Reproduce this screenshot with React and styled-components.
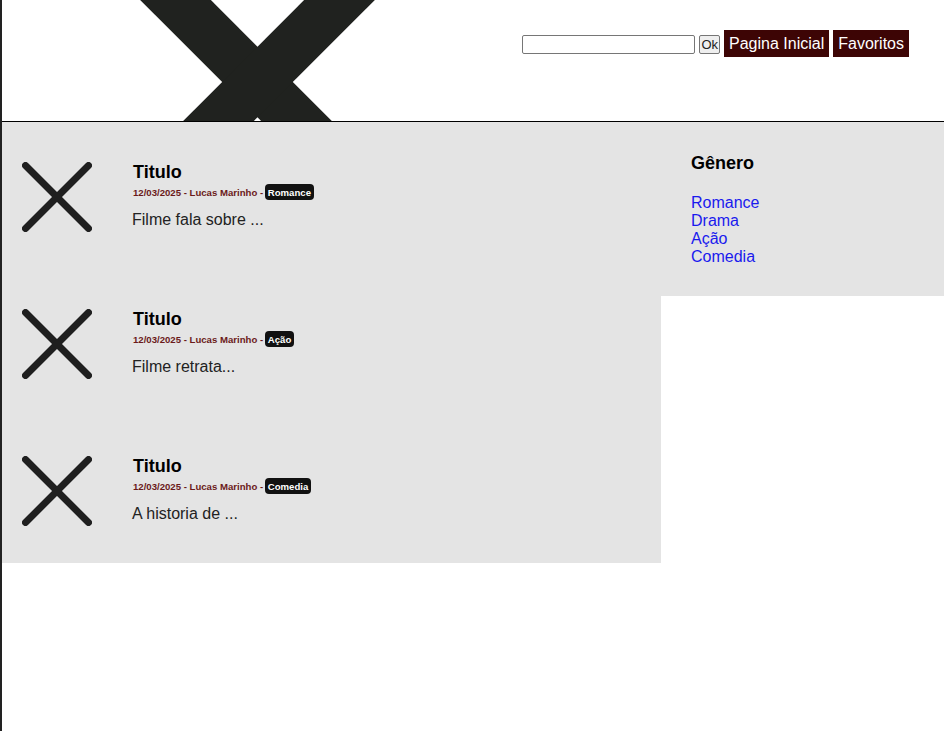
import styled, { createGlobalStyle } from 'styled-components';

const GlobalStyle = createGlobalStyle`
  html, body {
    margin: 0;
    padding: 0;
    background: #fff;
    font-family: "Liberation Sans", Arial, sans-serif;
  }
`;

const movies = [
  { id: 1, genre: 'Romance', text: 'Filme fala sobre ...' },
  { id: 2, genre: 'Ação', text: 'Filme retrata...' },
  { id: 3, genre: 'Comedia', text: 'A historia de ...' },
];

const genres = ['Romance', 'Drama', 'Ação', 'Comedia'];

const CrossIcon = ({ size = 70 }) => (
  <svg width={size} height={size} viewBox="0 0 70 70">
    <g stroke="#1f1f1f" strokeWidth="7" strokeLinecap="round">
      <line x1="3.5" y1="3.5" x2="66.5" y2="66.5" />
      <line x1="66.5" y1="3.5" x2="3.5" y2="66.5" />
    </g>
  </svg>
);

const Logo = () => (
  <svg width="260" height="121" viewBox="130 0 260 121">
    <g stroke="#20221f" strokeWidth="50">
      <line x1="7.5" y1="-168" x2="507.5" y2="332" />
      <line x1="507.5" y1="-168" x2="7.5" y2="332" />
    </g>
  </svg>
);

const App = () => {
  return (
    <>
      <GlobalStyle />
      <Page>
        <Header>
          <Logo />
          <Nav>
            <SearchInput type="text" />
            <OkButton>Ok</OkButton>
            <NavButton>Pagina Inicial</NavButton>
            <NavButton>Favoritos</NavButton>
          </Nav>
        </Header>
        <Main>
          <MovieList>
            {movies.map(movie => (
              <Card key={movie.id}>
                <Thumb>
                  <CrossIcon />
                </Thumb>
                <CardBody>
                  <Title>Titulo</Title>
                  <Meta>
                    12/03/2025 - Lucas Marinho -&nbsp;<Badge>{movie.genre}</Badge>
                  </Meta>
                  <Description>{movie.text}</Description>
                </CardBody>
              </Card>
            ))}
          </MovieList>
          <Aside>
            <AsideTitle>Gênero</AsideTitle>
            {genres.map(g => (
              <GenreLink key={g} href="#">{g}</GenreLink>
            ))}
          </Aside>
        </Main>
      </Page>
    </>
  );
};

const Page = styled.div`
  min-height: 100vh;
  border-left: 2px solid #222;
  box-sizing: border-box;
`;

const Header = styled.header`
  height: 121px;
  border-bottom: 1px solid #000;
  display: flex;
  align-items: flex-start;
  padding-left: 128px;
  overflow: hidden;
  svg {
    flex-shrink: 0;
  }
`;

const Nav = styled.nav`
  margin-left: auto;
  margin-right: 35px;
  margin-top: 30px;
  display: flex;
  align-items: center;
  gap: 4px;
`;

const SearchInput = styled.input`
  width: 173px;
  height: 19px;
  box-sizing: border-box;
  border: 1px solid #767676;
  border-radius: 2px;
  padding: 1px 2px;
  margin-top: 2px;
  font-size: 13px;
`;

const OkButton = styled.button`
  height: 19px;
  box-sizing: border-box;
  padding: 0 1px;
  margin-top: 2px;
  background: #efefef;
  border: 1px solid #767676;
  border-radius: 2px;
  font-family: "Liberation Sans", Arial, sans-serif;
  font-size: 13px;
  color: #222;
  line-height: 15px;
`;

const NavButton = styled.button`
  background: #3d0505;
  color: #fff;
  border: none;
  border-radius: 0;
  padding: 4px 5px;
  font-family: "Liberation Sans", Arial, sans-serif;
  font-size: 16px;
  line-height: 19px;
  cursor: pointer;
  &:first-of-type {
    margin-left: 1px;
  }
`;

const Main = styled.main`
  display: flex;
  align-items: flex-start;
`;

const MovieList = styled.section`
  width: 659px;
  background: #e4e4e4;
`;

const Card = styled.article`
  height: 147px;
  box-sizing: border-box;
  padding: 40px 0 0 20px;
  display: flex;
  align-items: flex-start;
`;

const Thumb = styled.div`
  width: 70px;
  height: 70px;
  flex-shrink: 0;
`;

const CardBody = styled.div`
  margin-left: 40px;
`;

const Title = styled.h3`
  margin: 0 0 0 1px;
  font-size: 18px;
  line-height: 21px;
  font-weight: bold;
  color: #000;
`;

const Meta = styled.div`
  margin: 1px 0 0 1px;
  height: 16px;
  display: flex;
  align-items: center;
  font-size: 9.6px;
  font-weight: bold;
  color: #6b1a1a;
  white-space: pre;
`;

const Badge = styled.span`
  display: inline-flex;
  align-items: center;
  height: 16px;
  padding: 0 3px;
  margin-left: -1px;
  background: #111;
  color: #fff;
  border-radius: 4px;
  font-size: 9.6px;
  font-weight: bold;
`;

const Description = styled.p`
  margin: 11px 0 0;
  font-size: 16px;
  line-height: 18px;
  color: #222;
`;

const Aside = styled.aside`
  flex: 1;
  background: #e4e4e4;
  padding: 31px 30px 30px 30px;
`;

const AsideTitle = styled.h3`
  margin: 0 0 20px;
  font-size: 18px;
  line-height: 21px;
  font-weight: bold;
  color: #000;
`;

const GenreLink = styled.a`
  display: block;
  font-size: 16px;
  line-height: 18px;
  color: #1a1aee;
  text-decoration: none;
`;

export default App;
